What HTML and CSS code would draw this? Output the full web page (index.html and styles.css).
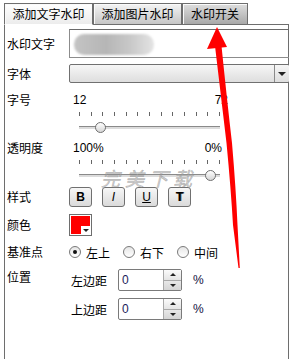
FILE: index.html
```html
<!DOCTYPE html>
<html lang="zh-CN">
<head>
  <meta charset="UTF-8" />
  <title>水印设置</title>
  <link rel="stylesheet" href="styles.css">
</head>
<body>
  <div class="window">
    <div class="tabs">
      <div class="tab active">添加文字水印</div>
      <div class="tab">添加图片水印</div>
      <div class="tab dark">水印开关</div>
    </div>

    <div class="panel">
      <div class="row row-text">
        <div class="label">水印文字</div>
        <div class="textbox"><div class="blur"></div></div>
      </div>

      <div class="row row-font">
        <div class="label">字体</div>
        <div class="select"><div class="select-btn"><span class="tri"></span></div></div>
      </div>

      <div class="row row-slider">
        <div class="label">字号</div>
        <div class="slider">
          <div class="nums wide"><span>12</span><span>72</span></div>
          <div class="ticks">
            <i></i><i></i><i></i><i></i><i></i><i></i><i></i><i></i><i></i><i></i><i></i><i></i><i></i>
          </div>
          <div class="track"><div class="thumb" style="left: 16px;"></div></div>
        </div>
      </div>

      <div class="row row-slider short">
        <div class="label">透明度</div>
        <div class="slider">
          <div class="nums"><span>100%</span><span>0%</span></div>
          <div class="ticks">
            <i></i><i></i><i></i><i></i><i></i><i></i><i></i><i></i><i></i><i></i><i></i><i></i><i></i>
          </div>
          <div class="track"><div class="thumb" style="left: 126px;"></div></div>
        </div>
      </div>

      <div class="row row-style">
        <div class="label">样式</div>
        <div class="btns">
          <div class="btn b">B</div>
          <div class="btn i">I</div>
          <div class="btn u">U</div>
          <div class="btn t">T</div>
        </div>
      </div>

      <div class="row row-color">
        <div class="label">颜色</div>
        <div class="swatch"><div class="fill"></div><div class="notch"><span class="tri small"></span></div></div>
      </div>

      <div class="row row-anchor">
        <div class="label">基准点</div>
        <div class="radios">
          <div class="radio checked"></div><span>左上</span>
          <div class="radio"></div><span>右下</span>
          <div class="radio"></div><span>中间</span>
        </div>
      </div>

      <div class="row row-pos">
        <div class="label">位置</div>
        <div class="spins">
          <div class="spin-row">
            <span class="sub">左边距</span>
            <div class="spin"><div class="val">0</div><div class="arrows"><div class="up"><span class="tri up-tri"></span></div><div class="down"><span class="tri small"></span></div></div></div>
            <span class="pct">%</span>
          </div>
          <div class="spin-row">
            <span class="sub">上边距</span>
            <div class="spin"><div class="val">0</div><div class="arrows"><div class="up"><span class="tri up-tri"></span></div><div class="down"><span class="tri small"></span></div></div></div>
            <span class="pct">%</span>
          </div>
        </div>
      </div>
    </div>

    <div class="mark">完美下载</div>

    <svg class="arrow" width="289" height="359" viewBox="0 0 289 359">
      <polygon points="217,27 207,49 227,47" fill="#ff0000"/>
      <path d="M215,46 Q222,105 226.5,143 Q231,190 233,225 L238.5,268 L239.8,268 L237.5,225 Q236,190 232,143 Q227,100 221.5,46 Z" fill="#ff0000"/>
    </svg>
  </div>
</body>
</html>
```

FILE: styles.css
```css
body {
  margin: 0;
  background: white;
  font-family: "Noto Sans CJK SC", "Liberation Sans", sans-serif;
  font-size: 12px;
  color: black;
  overflow: hidden;
  height: 359px;
}

.window {
  padding-top: 3px;
  padding-left: 4px;
}

.tabs {
  display: flex;
  margin-bottom: -1px;
}

.tab {
  box-sizing: border-box;
  height: 22px;
  line-height: 19px;
  text-align: center;
  border: 1px solid #6e6e6e;
  background: linear-gradient(#f4f4f4, #c6c6c6);
  width: 89px;
  box-shadow: inset 1px 1px 0 #fafafa;
}

.tab.active {
  background: linear-gradient(#ffffff, #ececec);
  border-bottom-color: white;
  position: relative;
  z-index: 1;
}

.tab.dark {
  width: 66px;
  background: linear-gradient(#dedede, #a9a9a9);
}

.panel {
  width: 285px;
  height: 335px;
  box-sizing: border-box;
  border: 1px solid #6e6e6e;
  border-bottom: none;
  padding-left: 1px;
}

.row {
  display: flex;
  align-items: center;
}

.label {
  width: 62px;
  padding-left: 1px;
  line-height: 16px;
  flex-shrink: 0;
}

.row-text { margin-top: 4px; height: 29px; }
.row-font { margin-top: 6px; height: 19px; }
.row-slider { margin-top: 9px; height: 48px; align-items: flex-start; }
.row-slider.short { margin-top: 0; height: 46px; }
.row-style { margin-top: 1px; height: 20px; }
.row-color { margin-top: 7px; height: 22px; }
.row-anchor { margin-top: 6px; height: 20px; }
.row-pos { margin-top: 7px; align-items: flex-start; }

.textbox {
  box-sizing: border-box;
  width: 222px;
  height: 29px;
  flex-shrink: 0;
  border: 1px solid #8c8c8c;
  border-top-color: #6a6a6a;
  padding: 4px 0 0 4px;
}

.blur {
  width: 80px;
  height: 21px;
  border-radius: 10px;
  background: linear-gradient(90deg, #c4c4c4, #b6b6b6 40%, #c8c8c8 70%, #e4e4e4);
  filter: blur(1px);
}

.select {
  box-sizing: border-box;
  width: 221px;
  height: 19px;
  flex-shrink: 0;
  border: 1px solid #707070;
  border-radius: 2px;
  background: linear-gradient(#f6f6f6, #dedede);
  display: flex;
  justify-content: flex-end;
}

.select-btn {
  width: 14px;
  border-left: 1px solid #8a8a8a;
  display: flex;
  align-items: center;
  justify-content: center;
}

.tri {
  width: 0;
  height: 0;
  border-left: 4px solid transparent;
  border-right: 4px solid transparent;
  border-top: 4px solid #222;
}

.tri.small {
  border-left-width: 3px;
  border-right-width: 3px;
  border-top-width: 3px;
}

.tri.up-tri {
  border-left: 3px solid transparent;
  border-right: 3px solid transparent;
  border-top: none;
  border-bottom: 3px solid #222;
}

.slider {
  width: 155px;
}

.nums {
  display: flex;
  justify-content: space-between;
  padding: 0 2px 0 4px;
  font-family: "Liberation Sans", sans-serif;
  line-height: 16px;
}

.nums.wide {
  padding-right: 0;
  margin-right: -4px;
}

.ticks {
  display: flex;
  justify-content: space-between;
  width: 141px;
  height: 4px;
  margin: 4px 0 0 10px;
}

.ticks i {
  width: 1px;
  background: #666;
}

.track {
  position: relative;
  width: 141px;
  height: 3px;
  margin: 10px 0 0 10px;
  background: #dcdcdc;
  border-top: 1px solid #8a8a8a;
  box-sizing: border-box;
}

.thumb {
  position: absolute;
  top: -5px;
  width: 11px;
  height: 11px;
  box-sizing: border-box;
  border: 1px solid #6e6e6e;
  border-radius: 50%;
  background: linear-gradient(#ffffff, #d6d6d6);
}

.btns {
  display: flex;
  gap: 10px;
}

.btn {
  box-sizing: border-box;
  width: 23px;
  height: 20px;
  border: 1px solid #707070;
  border-radius: 3px;
  background: linear-gradient(#f7f7f7, #dadada);
  text-align: center;
  line-height: 18px;
  font-family: "Liberation Sans", sans-serif;
  font-size: 12px;
}

.btn.b { font-weight: bold; }
.btn.i { font-style: italic; }
.btn.u { text-decoration: underline; }
.btn.t { font-weight: bold; text-shadow: 1px 0 0 #444; }

.swatch {
  position: relative;
  box-sizing: border-box;
  width: 23px;
  height: 22px;
  border: 1px solid #6e6e6e;
  padding: 1px;
  background: white;
}

.fill {
  width: 100%;
  height: 100%;
  background: #ff0000;
}

.notch {
  position: absolute;
  right: 1px;
  bottom: 1px;
  width: 9px;
  height: 8px;
  background: white;
  display: flex;
  align-items: center;
  justify-content: center;
}

.radios {
  display: flex;
  align-items: center;
}

.radio {
  box-sizing: border-box;
  width: 12px;
  height: 12px;
  border: 1px solid #7a7a7a;
  border-radius: 50%;
  background: linear-gradient(#e6e6e6, #ffffff);
  display: flex;
  align-items: center;
  justify-content: center;
}

.radio.checked::after {
  content: "";
  width: 4px;
  height: 4px;
  border-radius: 50%;
  background: #111;
}

.radios span {
  margin: 0 13px 0 5px;
}

.spins {
  display: flex;
  flex-direction: column;
  gap: 7px;
}

.spin-row {
  display: flex;
  align-items: center;
  height: 22px;
}

.sub {
  width: 47px;
  padding-left: 2px;
  line-height: 16px;
  margin-top: 1px;
}

.spin {
  box-sizing: border-box;
  width: 64px;
  height: 22px;
  border: 1px solid #7a7a7a;
  border-radius: 2px;
  display: flex;
}

.val {
  flex: 1;
  padding-left: 3px;
  font-family: "Liberation Sans", sans-serif;
  font-size: 12px;
  line-height: 20px;
  color: #1c1c5a;
}

.arrows {
  width: 17px;
  border-left: 1px solid #a8a8a8;
  display: flex;
  flex-direction: column;
}

.arrows div {
  flex: 1;
  display: flex;
  align-items: center;
  justify-content: center;
  background: linear-gradient(#fbfbfb, #e4e4e4);
}

.arrows .down {
  border-top: 1px solid #a8a8a8;
  background: linear-gradient(#e8e8e8, #d4d4d4);
}

.pct {
  margin-left: 11px;
  font-family: "Liberation Sans", sans-serif;
  color: #101040;
}

.mark {
  position: absolute;
  left: 101px;
  top: 168px;
  font-size: 19px;
  line-height: 19px;
  letter-spacing: 5px;
  color: rgba(170, 170, 170, 0.55);
  font-style: italic;
  -webkit-text-stroke: 0.5px rgba(120, 120, 120, 0.5);
}

.arrow {
  position: absolute;
  left: 0;
  top: 0;
}
```
